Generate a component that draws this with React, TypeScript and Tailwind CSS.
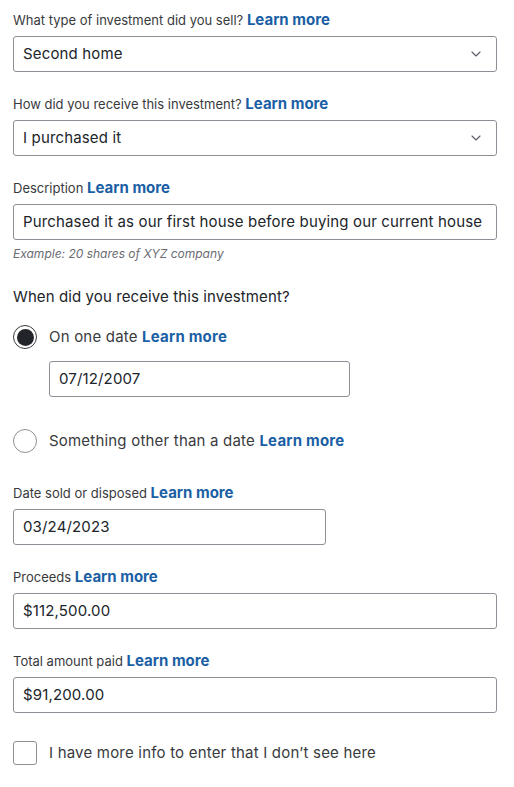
import { ChevronDown } from 'lucide-react';

const font = { fontFamily: 'Inter, "Open Sans", "Liberation Sans", sans-serif' };

const LearnMore = () => (
  <a className="font-bold text-[15px] leading-4 text-[#1b5fa5] cursor-pointer">Learn more</a>
);

const Label = ({ text }: { text: string }) => (
  <div className="text-[13px] leading-4 text-[#393a3d] mb-2">
    {text} <LearnMore />
  </div>
);

const Field = ({ value, width = 'w-full', select = false }: { value: string; width?: string; select?: boolean }) => (
  <div
    className={`${width} h-9 border border-[#8d9096] rounded-[3px] flex items-center justify-between pl-[9px] pr-[12px] text-[15px] tracking-[0.15px] text-[#21252a] bg-white`}
  >
    <span className="truncate">{value}</span>
    {select && <ChevronDown className="w-4 h-4 text-[#5d6066]" strokeWidth={1.75} />}
  </div>
);

const Radio = ({ checked }: { checked?: boolean }) => (
  <div
    className={`w-6 h-6 rounded-full border ${checked ? 'border-[#393a3d] border-[1.5px]' : 'border-[#8d9096]'} flex items-center justify-center shrink-0`}
  >
    {checked && <div className="w-[17px] h-[17px] rounded-full bg-[#21252a]" />}
  </div>
);

export default function App() {
  return (
    <div className="w-[514px] min-h-[787px] bg-white pl-[13px] pr-[17px] pt-3" style={font}>
      <Label text="What type of investment did you sell?" />
      <Field value="Second home" select />

      <div className="mt-6">
        <Label text="How did you receive this investment?" />
        <Field value="I purchased it" select />
      </div>

      <div className="mt-6">
        <Label text="Description" />
        <Field value="Purchased it as our first house before buying our current house" />
        <div className="text-[12px] leading-4 italic text-[#6b6c72] mt-[6px]">Example: 20 shares of XYZ company</div>
      </div>

      <div className="mt-[25px] text-[15px] leading-5 tracking-[0.1px] text-[#21252a]">When did you receive this investment?</div>

      <div className="mt-[18px] h-6 flex items-center gap-3">
        <Radio checked />
        <span className="text-[15px] tracking-[0.2px] text-[#393a3d]">
          On one date <LearnMore />
        </span>
      </div>
      <div className="mt-3 pl-9">
        <Field value="07/12/2007" width="w-[301px]" />
      </div>

      <div className="mt-8 h-6 flex items-center gap-3">
        <Radio />
        <span className="text-[15px] tracking-[0.2px] text-[#393a3d]">
          Something other than a date <LearnMore />
        </span>
      </div>

      <div className="mt-8">
        <Label text="Date sold or disposed" />
        <Field value="03/24/2023" width="w-[313px]" />
      </div>

      <div className="mt-6">
        <Label text="Proceeds" />
        <Field value="$112,500.00" />
      </div>

      <div className="mt-6">
        <Label text="Total amount paid" />
        <Field value="$91,200.00" />
      </div>

      <div className="mt-7 h-6 flex items-center gap-3">
        <div className="w-6 h-6 rounded-[3px] border border-[#8d9096] shrink-0" />
        <span className="text-[15px] tracking-[0.2px] text-[#393a3d]">I have more info to enter that I don’t see here</span>
      </div>
    </div>
  );
}
